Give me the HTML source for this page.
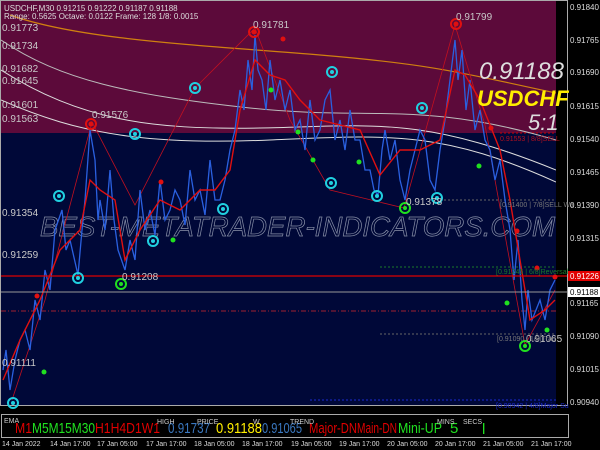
<!DOCTYPE html>
<html><head><meta charset="utf-8"><style>
html,body{margin:0;padding:0;background:#000;width:600px;height:450px;overflow:hidden}
svg text{font-family:"Liberation Sans",sans-serif}
</style></head><body>
<svg width="600" height="450" viewBox="0 0 600 450" xmlns="http://www.w3.org/2000/svg">
<defs><clipPath id="c"><rect x="1" y="1" width="555" height="404"/></clipPath></defs>
<rect width="600" height="450" fill="#000"/>
<rect x="1" y="1" width="556" height="132" fill="#5c0a3a"/>
<rect x="1" y="133" width="556" height="272" fill="#000838"/>
<rect x="556" y="1" width="11" height="404" fill="#000"/>
<rect x="0.5" y="0.5" width="567" height="405" fill="none" stroke="#aaa" stroke-width="1"/>
<g clip-path="url(#c)">
<line x1="500" y1="133" x2="556" y2="133" stroke="#c00" stroke-dasharray="2,2"/>
<line x1="440" y1="200" x2="556" y2="200" stroke="#666" stroke-dasharray="2,2"/>
<line x1="380" y1="267" x2="556" y2="267" stroke="#1a7a2a" stroke-dasharray="2,2"/>
<line x1="1" y1="311" x2="556" y2="311" stroke="#a02030" stroke-dasharray="5,2,1,2"/>
<line x1="380" y1="334" x2="556" y2="334" stroke="#666" stroke-dasharray="2,2"/>
<line x1="310" y1="400" x2="556" y2="400" stroke="#1a2ad0" stroke-dasharray="2,2"/>
<path d="M10,15 C80,40 200,45 320,55 S470,75 556,93" fill="none" stroke="#d08010" stroke-width="1.2"/>
<path d="M1,40 C60,80 130,95 250,108 S420,100 556,140" fill="none" stroke="#bbb" stroke-width="1"/>
<path d="M1,70 C80,120 150,130 260,128 S420,115 556,170" fill="none" stroke="#ddd" stroke-width="1"/>
<path d="M1,100 C80,135 150,145 270,140 S440,130 556,182" fill="none" stroke="#ddd" stroke-width="1"/>
<text x="40" y="236" font-size="28" font-style="italic" fill="none" stroke="#8890a8" stroke-width="0.7" textLength="515" lengthAdjust="spacingAndGlyphs">BEST-METATRADER-INDICATORS.COM</text>
<polyline points="12,400 45,300 92,122 135,205 195,88 255,28 290,120 330,190 404,208 455,25 485,125 525,345 555,290" fill="none" stroke="#c01020" stroke-width="0.8"/>
<polyline points="3,370 6,350 10,390 15,360 20,340 25,330 30,350 35,300 40,320 45,270 50,290 55,230 62,210 66,250 70,240 78,275 82,230 85,200 90,130 95,160 98,220 100,200 105,230 110,170 114,220 118,250 125,270 130,240 135,260 140,190 145,230 150,210 155,235 160,180 165,220 170,210 175,190 180,200 185,225 190,170 195,200 200,190 205,215 210,160 215,200 220,200 225,180 230,150 235,130 240,90 244,110 248,60 252,90 255,35 258,70 262,80 266,110 270,60 275,100 280,80 285,110 290,90 295,130 300,120 305,150 310,100 315,140 320,130 325,100 330,90 335,140 340,120 345,150 350,110 355,140 360,140 365,170 370,170 374,190 378,195 382,150 385,130 390,160 395,140 400,180 405,200 410,170 415,150 420,130 425,140 430,180 435,190 440,150 445,120 450,80 455,40 458,80 462,50 466,110 470,80 475,130 480,110 485,140 490,150 495,180 500,160 505,200 510,230 514,280 518,240 522,300 525,330 528,290 532,320 536,310 540,300 545,320 550,290 555,280" fill="none" stroke="#2a60e0" stroke-width="1.3"/>
<polyline points="3,380 20,340 40,300 60,250 80,230 90,180 100,190 115,200 125,260 140,230 160,200 180,210 200,190 215,190 230,170 240,110 255,60 270,75 285,80 300,100 320,120 340,125 360,130 380,175 400,150 420,150 440,140 455,70 465,75 480,100 500,150 510,200 520,260 530,320 545,310 555,300" fill="none" stroke="#e01010" stroke-width="1.4"/>
</g>
<line x1="1" y1="276" x2="567" y2="276" stroke="#d00" stroke-width="1.2"/>
<line x1="1" y1="292" x2="567" y2="292" stroke="#999" stroke-width="1"/>
<g fill="none" stroke-width="2">
<circle cx="91" cy="124" r="5" stroke="#e01010"/><circle cx="254" cy="32" r="5" stroke="#e01010"/><circle cx="456" cy="24" r="5" stroke="#e01010"/>
<circle cx="195" cy="88" r="5" stroke="#20d0e0"/><circle cx="135" cy="134" r="5" stroke="#20d0e0"/><circle cx="332" cy="72" r="5" stroke="#20d0e0"/><circle cx="422" cy="108" r="5" stroke="#20d0e0"/>
<circle cx="59" cy="196" r="5" stroke="#20d0e0"/><circle cx="223" cy="209" r="5" stroke="#20d0e0"/><circle cx="153" cy="241" r="5" stroke="#20d0e0"/><circle cx="78" cy="278" r="5" stroke="#20d0e0"/><circle cx="331" cy="183" r="5" stroke="#20d0e0"/><circle cx="377" cy="196" r="5" stroke="#20d0e0"/><circle cx="437" cy="198" r="5" stroke="#20d0e0"/><circle cx="13" cy="403" r="5" stroke="#20d0e0"/>
<circle cx="121" cy="284" r="5" stroke="#20e020"/><circle cx="405" cy="208" r="5" stroke="#20e020"/><circle cx="525" cy="346" r="5" stroke="#20e020"/>
</g>
<g fill="#20d0e0"><circle cx="195" cy="88" r="2"/><circle cx="135" cy="134" r="2"/><circle cx="332" cy="72" r="2"/><circle cx="422" cy="108" r="2"/><circle cx="59" cy="196" r="2"/><circle cx="223" cy="209" r="2"/><circle cx="153" cy="241" r="2"/><circle cx="78" cy="278" r="2"/><circle cx="331" cy="183" r="2"/><circle cx="377" cy="196" r="2"/><circle cx="437" cy="198" r="2"/><circle cx="13" cy="403" r="2"/></g>
<g fill="#20e020"><circle cx="121" cy="284" r="2"/><circle cx="405" cy="208" r="2"/><circle cx="525" cy="346" r="2"/></g>
<g fill="#e01010"><circle cx="91" cy="124" r="2.5"/><circle cx="254" cy="32" r="2.5"/><circle cx="456" cy="24" r="2.5"/><circle cx="283" cy="39" r="2.5"/><circle cx="161" cy="182" r="2.5"/><circle cx="37" cy="296" r="2.5"/><circle cx="491" cy="128" r="2.5"/><circle cx="517" cy="231" r="2.5"/><circle cx="537" cy="268" r="2.5"/><circle cx="555" cy="277" r="2.5"/></g>
<g fill="#20e020"><circle cx="271" cy="90" r="2.5"/><circle cx="298" cy="132" r="2.5"/><circle cx="313" cy="160" r="2.5"/><circle cx="173" cy="240" r="2.5"/><circle cx="359" cy="162" r="2.5"/><circle cx="479" cy="166" r="2.5"/><circle cx="44" cy="372" r="2.5"/><circle cx="507" cy="303" r="2.5"/><circle cx="547" cy="330" r="2.5"/></g>
<g font-size="10" fill="#c8c8c8">
<text x="4" y="11" font-size="8" fill="#ddd">USDCHF,M30  0.91215 0.91222 0.91187 0.91188</text>
<text x="4" y="19" font-size="8" fill="#ddd">Range: 0.5625   Octave: 0.0122   Frame: 128   1/8: 0.0015</text>
<text x="2" y="31">0.91773</text><text x="2" y="49">0.91734</text><text x="2" y="72">0.91682</text><text x="2" y="84">0.91645</text><text x="2" y="108">0.91601</text><text x="2" y="122">0.91563</text>
<text x="2" y="216">0.91354</text><text x="2" y="258">0.91259</text><text x="2" y="366">0.91111</text>
<text x="92" y="118">0.91576</text><text x="253" y="28">0.91781</text><text x="456" y="20">0.91799</text><text x="122" y="280">0.91208</text><text x="406" y="205">0.91378</text><text x="526" y="342">0.91065</text>
</g>
<g font-size="7" fill="#777"><text x="500" y="207">[0.91400 | 7/8]SELL Wa</text><text x="497" y="341">[0.91090 | 1/8]Trad</text></g>
<text x="500" y="141" font-size="7" fill="#b01020">0.91553 | 8/8]SELL</text>
<text x="496" y="274" font-size="7" fill="#1a7a2a">[0.91245 | 6/8]Reversal</text>
<text x="496" y="408" font-size="7" fill="#1a2ad0">[0.90942 | 4/8]Major Su</text>
<text x="479" y="79" font-size="24" font-style="italic" fill="#ddd">0.91188</text>
<text x="477" y="106" font-size="22" font-style="italic" font-weight="bold" fill="#ffee00">USDCHF</text>
<text x="528" y="130" font-size="22" font-style="italic" fill="#ddd">5:1</text>
<g font-size="8" fill="#ddd">
<text x="570" y="10">0.91840</text><text x="570" y="43">0.91765</text><text x="570" y="75">0.91690</text><text x="570" y="109">0.91615</text><text x="570" y="142">0.91540</text><text x="570" y="175">0.91465</text><text x="570" y="208">0.91390</text><text x="570" y="241">0.91315</text><text x="570" y="306">0.91165</text><text x="570" y="339">0.91090</text><text x="570" y="372">0.91015</text><text x="570" y="405">0.90940</text>
</g>
<rect x="568" y="271" width="32" height="10" fill="#e00000"/><text x="570" y="279" font-size="8" fill="#fff">0.91226</text>
<rect x="568" y="287" width="32" height="10" fill="#fff"/><text x="570" y="295" font-size="8" fill="#000">0.91188</text>
<rect x="1.5" y="414.5" width="567" height="23" fill="#000" stroke="#aaa"/>
<g font-size="15">
<text x="15" y="433" fill="#e00000" textLength="17" lengthAdjust="spacingAndGlyphs">M1</text>
<text x="32" y="433" fill="#20e020" textLength="63" lengthAdjust="spacingAndGlyphs">M5M15M30</text>
<text x="95" y="433" fill="#e00000" textLength="65" lengthAdjust="spacingAndGlyphs">H1H4D1W1</text>
<text x="168" y="433" fill="#3a78c0" textLength="42" lengthAdjust="spacingAndGlyphs">0.91737</text>
<text x="216" y="433" fill="#ffee00" textLength="46" lengthAdjust="spacingAndGlyphs">0.91188</text>
<text x="262" y="433" fill="#3a78c0" textLength="40" lengthAdjust="spacingAndGlyphs">0.91065</text>
<text x="309" y="433" fill="#e00000" textLength="48" lengthAdjust="spacingAndGlyphs">Major-DN</text>
<text x="357" y="433" fill="#e00000" textLength="40" lengthAdjust="spacingAndGlyphs">Main-DN</text>
<text x="398" y="433" fill="#20e020" textLength="44" lengthAdjust="spacingAndGlyphs">Mini-UP</text>
<text x="450" y="433" fill="#20e020">5</text><text x="482" y="434" fill="#20e020">l</text>
</g>
<g font-size="7" fill="#ccc"><text x="4" y="423">EMA</text><text x="157" y="424">HIGH</text><text x="197" y="424">PRICE</text><text x="253" y="424">W</text><text x="290" y="424">TREND</text><text x="437" y="424">MINS</text><text x="463" y="424">SECS</text></g>
<g font-size="7" fill="#ddd"><text x="2" y="446">14 Jan 2022</text><text x="50" y="446">14 Jan 17:00</text><text x="97" y="446">17 Jan 05:00</text><text x="146" y="446">17 Jan 17:00</text><text x="194" y="446">18 Jan 05:00</text><text x="242" y="446">18 Jan 17:00</text><text x="291" y="446">19 Jan 05:00</text><text x="339" y="446">19 Jan 17:00</text><text x="387" y="446">20 Jan 05:00</text><text x="435" y="446">20 Jan 17:00</text><text x="483" y="446">21 Jan 05:00</text><text x="531" y="446">21 Jan 17:00</text></g>
</svg>
</body></html>
